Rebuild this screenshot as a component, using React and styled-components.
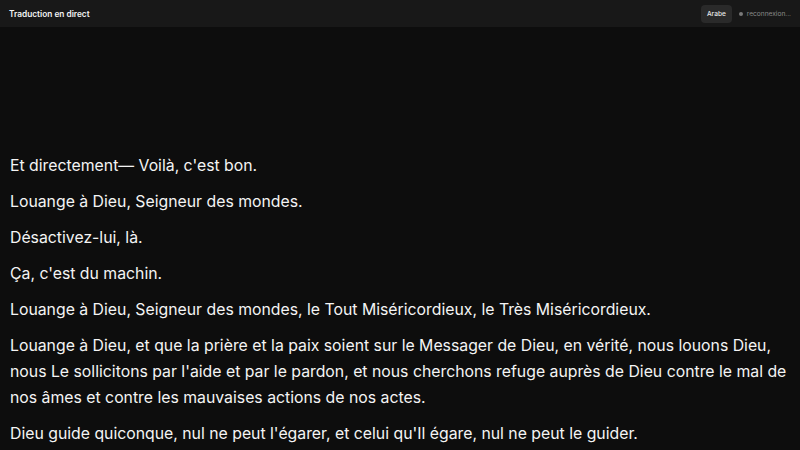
import styled, { createGlobalStyle } from "styled-components";

const GlobalStyle = createGlobalStyle`
  html, body {
    margin: 0;
    padding: 0;
    background: #0d0d0d;
    height: 100%;
  }
  #root {
    height: 100%;
  }
  * {
    box-sizing: border-box;
  }
`;

const lines = [
  "Et directement— Voilà, c'est bon.",
  "Louange à Dieu, Seigneur des mondes.",
  "Désactivez-lui, là.",
  "Ça, c'est du machin.",
  "Louange à Dieu, Seigneur des mondes, le Tout Miséricordieux, le Très Miséricordieux.",
  "Louange à Dieu, et que la prière et la paix soient sur le Messager de Dieu, en vérité, nous louons Dieu, nous Le sollicitons par l'aide et par le pardon, et nous cherchons refuge auprès de Dieu contre le mal de nos âmes et contre les mauvaises actions de nos actes.",
  "Dieu guide quiconque, nul ne peut l'égarer, et celui qu'Il égare, nul ne peut le guider.",
];

// live translation screen: header + transcript pinned to the bottom
const App = () => {
  return (
    <Page>
      <GlobalStyle />
      <Header>
        <Title>Traduction en direct</Title>
        <Controls>
          <LangBadge>Arabe</LangBadge>
          <Status>
            <Dot />
            reconnexion...
          </Status>
        </Controls>
      </Header>
      <Transcript>
        {lines.map((line, i) => (
          <Line key={i}>{line}</Line>
        ))}
      </Transcript>
    </Page>
  );
};

const Page = styled.div`
  height: 100vh;
  display: flex;
  flex-direction: column;
  background: #0d0d0d;
  font-family: Inter, "Liberation Sans", sans-serif;
  overflow: hidden;
`;

const Header = styled.div`
  flex: none;
  height: 27px;
  display: flex;
  align-items: center;
  justify-content: space-between;
  padding: 0 9px 0 9px;
  background: #181818;
`;

const Title = styled.div`
  color: #f2f2f2;
  font-size: 8.3px;
  font-weight: 600;
`;

const Controls = styled.div`
  display: flex;
  align-items: center;
  gap: 7px;
`;

const LangBadge = styled.div`
  background: #2a2a2a;
  color: #e8e8e8;
  font-size: 6.6px;
  font-weight: 500;
  padding: 5px 6px;
  border-radius: 4px;
`;

const Status = styled.div`
  display: flex;
  align-items: center;
  gap: 4px;
  color: #8a8a8a;
  font-size: 6.6px;
`;

const Dot = styled.span`
  width: 4px;
  height: 4px;
  border-radius: 50%;
  background: #7a7a7a;
`;

const Transcript = styled.div`
  flex: 1;
  display: flex;
  flex-direction: column;
  justify-content: flex-end;
  padding: 0 10px 3px 10px;
`;

const Line = styled.p`
  margin: 10px 0 0 0;
  color: #f4f4f4;
  font-size: 15.8px;
  line-height: 26px;
`;

export default App;
